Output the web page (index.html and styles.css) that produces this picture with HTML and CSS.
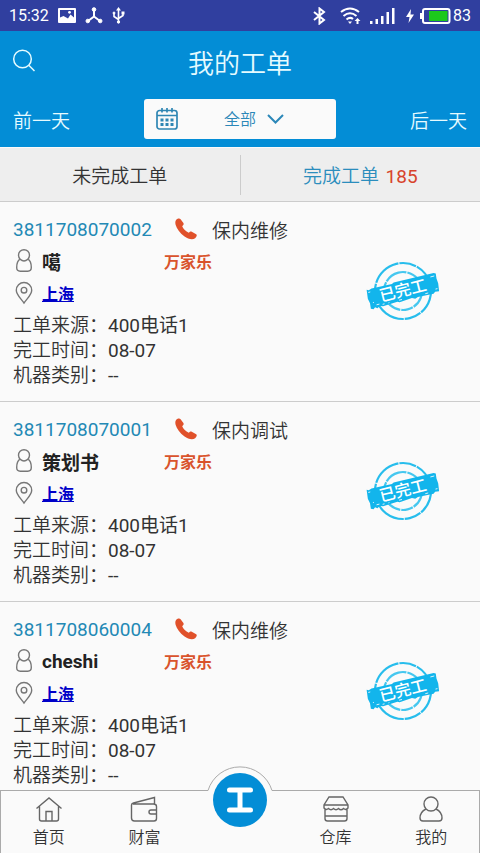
FILE: index.html
```html
<!DOCTYPE html>
<html lang="zh-CN">
<head>
    <meta charset="UTF-8">
    <meta name="viewport" content="width=device-width, initial-scale=1.0">
    <title>我的工单</title>
    <link rel="stylesheet" href="styles.css">
</head>
<body>
    <!-- shared icons -->
    <svg class="sprite" aria-hidden="true">
        <symbol id="icon-phone" viewBox="0 0 22 22">
            <path d="M1.200 1.800C2.600.4 4.600-.1 5.600 1.200L8.400 5C9 6.200 8.600 6.900 7.200 8.200C8.300 10.800 10.800 13.200 13.800 14.700C15 13.500 15.700 13 16.800 13.700L21.200 16.200C22.400 17.200 21.500 18.900 20.100 20.200C17.700 22.300 13.300 21.300 9.200 18.300C5 15.100 1.700 10.500.6 6.700C.1 4.800.2 3 1.200 1.800Z"/>
        </symbol>
        <symbol id="icon-user" viewBox="0 0 18 24">
            <path d="M5.200 10.200A5.500 5.500 0 1 1 12.800 10.200C15.300 11.500 16.300 14.500 16.300 18.500C16.300 21 15.200 22.200 12.700 22.200H5.300C2.800 22.200 1.700 21 1.700 18.500C1.700 14.500 2.700 11.500 5.200 10.200ZM5.200 10.200Q9 13.600 12.800 10.200"/>
        </symbol>
        <symbol id="icon-pin" viewBox="0 0 18 24">
            <path d="M9 22C6 17.500 1.300 13.800 1.300 9.200A7.700 7.700 0 0 1 16.700 9.200C16.700 13.800 12 17.500 9 22Z"/>
            <circle cx="9" cy="9.200" r="2.800"/>
        </symbol>
        <symbol id="icon-stamp" viewBox="0 0 74 60">
            <g transform="rotate(-14 37 30)">
                <circle cx="37" cy="30" r="28" fill="none" stroke="#27bdec" stroke-width="2.200" stroke-dasharray="31 1 17 1 42 1 9 1"/>
                <circle cx="37" cy="30" r="19" fill="none" stroke="#45c7ef" stroke-width="2.200" stroke-dasharray="23 1 12 1"/>
                <path fill="#12b5ec" d="M2 20L4 21 7 20 28 20.500 30 19.500 71 20 73 21 72.500 26 73 31 72 39 68 38.500 66 40 50 39.500 47 40.500 44 39 31 40 29 39 14 40 11 39 8 40.500 6 39 4 40.500 1.500 39.500 2 34 1 29Z"/>
                <path fill="none" stroke="#fafafa" stroke-width=".8" d="M3 23h2M8 37h3M14 38h2M31 38h3M67 23h4M69 36h2M5 34h1M58 38h3M20 38h1"/>
            </g>
        </symbol>
    </svg>

    <div class="app">
        <div class="status-bar">
            <span class="status-time">15:32</span>
            <svg class="status-picture" width="18" height="15" viewBox="0 0 18 15">
                <rect width="18" height="15" rx="1" fill="#fff"/>
                <path fill="#303f9f" d="M2 9.500V2H16V9.500L12.500 6.500 10 10.500 5.500 8Z"/>
                <circle cx="11.500" cy="4.300" r="1.400" fill="#fff"/>
            </svg>
            <svg width="18" height="17" viewBox="0 0 18 17" fill="#fff" stroke="#fff">
                <path d="M9 3V9.500L3 14M9 9.500L15 14" fill="none" stroke-width="2"/>
                <circle cx="9" cy="2.500" r="1.800"/>
                <circle cx="2.800" cy="14" r="1.800"/>
                <circle cx="15.200" cy="14" r="1.800"/>
            </svg>
            <svg width="13" height="17" viewBox="0 0 13 17" fill="#fff" stroke="#fff">
                <path d="M6.500 3V15M2 6V9.500L6.500 12.500M11 6V8.500L6.500 11.500" fill="none" stroke-width="1.600"/>
                <path d="M6.500 0L4 3.500H9Z" stroke="none"/>
                <circle cx="6.500" cy="15" r="1.200"/>
                <circle cx="2" cy="6" r="1"/>
                <rect x="10" y="5" width="2" height="2"/>
            </svg>
            <div class="status-right">
                <svg class="status-bluetooth" width="13" height="18" viewBox="0 0 13 18" fill="none" stroke="#fff" stroke-width="2">
                    <path d="M1 5L11 13L6.500 16.500V1.500L11 5L1 13"/>
                </svg>
                <svg class="status-wifi" width="21" height="18" viewBox="0 0 21 18" fill="none" stroke="#fff" stroke-width="2">
                    <path d="M1 5Q10 -2 19 5M3.500 9Q10 3.500 16.500 9M6.500 12.500Q10 9.500 13 12"/>
                    <path d="M8 14.500H12L10 17Z" fill="#fff" stroke="none"/>
                    <path d="M17.500 11L20.500 14H18.500V17H16.500V14H14.500Z" fill="#fff" stroke="none"/>
                </svg>
                <svg class="status-signal" width="25" height="16" viewBox="0 0 25 16" fill="#fff">
                    <path d="M0 13h2.500v3H0zM5.500 11H8v5H5.500zM11 8h2.500v8H11zM16.500 4H19v12h-2.500zM22 0h2.500v16H22z"/>
                </svg>
                <svg class="status-bolt" width="8" height="14" viewBox="0 0 8 14" fill="#fff">
                    <path d="M5 0L0 8H3.500L2.500 14L8 5.500H4.500Z"/>
                </svg>
                <svg width="31" height="16" viewBox="0 0 31 16">
                    <rect x="3" y="1" width="26.500" height="14" rx="2" fill="none" stroke="#fff" stroke-width="2"/>
                    <path d="M0 5h3v6H0z" fill="#fff"/>
                    <path d="M9 3h18.500v10H9z" fill="#1cc81c"/>
                </svg>
                <span class="status-battery">83</span>
            </div>
        </div>

        <header class="header">
            <div class="title-row">
                <button class="search" type="button" aria-label="搜索">
                    <svg width="24" height="24" viewBox="0 0 24 24" fill="none" stroke="#e6fbff" stroke-width="1.500">
                        <circle cx="10.500" cy="10" r="8.800"/>
                        <path d="M16.800 16.300L22.500 22"/>
                    </svg>
                </button>
                <h1>我的工单</h1>
            </div>
            <div class="date-row">
                <button class="day" type="button">前一天</button>
                <label class="date-picker">
                    <svg width="22" height="22" viewBox="0 0 22 22" fill="none" stroke="#2f86b3" stroke-width="1.700">
                        <rect x="1" y="2.500" width="20" height="18.500" rx="2.500"/>
                        <path d="M1 7.500H21M6 0V4.500M11 0V4.500M16 0V4.500"/>
                        <path d="M4.500 12H7.500M9.500 12H12.500M14.500 12H17.500M4.500 16.500H7.500M9.500 16.500H12.500M14.500 16.500H17.500" stroke-width="2.800"/>
                    </svg>
                    <select aria-label="日期">
                        <option>全部</option>
                    </select>
                    <svg width="17" height="10" viewBox="0 0 17 10" fill="none" stroke="#2b87b8" stroke-width="2">
                        <path d="M1 1L8.500 8.500L16 1"/>
                    </svg>
                </label>
                <button class="day next" type="button">后一天</button>
            </div>
        </header>

        <div class="tabs">
            <button class="tab" type="button">未完成工单</button>
            <button class="tab active" type="button">完成工单 <span class="count">185</span></button>
        </div>

        <main class="orders">
            <article class="order">
                <div class="order-info">
                    <div class="order-row">
                        <span class="order-number">3811708070002</span>
                        <svg class="phone"><use href="#icon-phone"/></svg>
                        <span>保内维修</span>
                    </div>
                    <div class="order-row">
                        <svg class="row-icon"><use href="#icon-user"/></svg>
                        <span class="name">噶</span>
                        <span class="brand">万家乐</span>
                    </div>
                    <div class="order-row">
                        <svg class="row-icon"><use href="#icon-pin"/></svg>
                        <a class="city" href="#">上海</a>
                    </div>
                    <div class="details">
                        <p>工单来源：<span class="value">400电话1</span></p>
                        <p>完工时间：<span class="value">08-07</span></p>
                        <p>机器类别：<span class="value">--</span></p>
                    </div>
                </div>
                <div class="stamp">
                    <svg><use href="#icon-stamp"/></svg>
                    <span>已完工</span>
                </div>
            </article>

            <article class="order">
                <div class="order-info">
                    <div class="order-row">
                        <span class="order-number">3811708070001</span>
                        <svg class="phone"><use href="#icon-phone"/></svg>
                        <span>保内调试</span>
                    </div>
                    <div class="order-row">
                        <svg class="row-icon"><use href="#icon-user"/></svg>
                        <span class="name">策划书</span>
                        <span class="brand">万家乐</span>
                    </div>
                    <div class="order-row">
                        <svg class="row-icon"><use href="#icon-pin"/></svg>
                        <a class="city" href="#">上海</a>
                    </div>
                    <div class="details">
                        <p>工单来源：<span class="value">400电话1</span></p>
                        <p>完工时间：<span class="value">08-07</span></p>
                        <p>机器类别：<span class="value">--</span></p>
                    </div>
                </div>
                <div class="stamp">
                    <svg><use href="#icon-stamp"/></svg>
                    <span>已完工</span>
                </div>
            </article>

            <article class="order">
                <div class="order-info">
                    <div class="order-row">
                        <span class="order-number">3811708060004</span>
                        <svg class="phone"><use href="#icon-phone"/></svg>
                        <span>保内维修</span>
                    </div>
                    <div class="order-row">
                        <svg class="row-icon"><use href="#icon-user"/></svg>
                        <span class="name">cheshi</span>
                        <span class="brand">万家乐</span>
                    </div>
                    <div class="order-row">
                        <svg class="row-icon"><use href="#icon-pin"/></svg>
                        <a class="city" href="#">上海</a>
                    </div>
                    <div class="details">
                        <p>工单来源：<span class="value">400电话1</span></p>
                        <p>完工时间：<span class="value">08-07</span></p>
                        <p>机器类别：<span class="value">--</span></p>
                    </div>
                </div>
                <div class="stamp">
                    <svg><use href="#icon-stamp"/></svg>
                    <span>已完工</span>
                </div>
            </article>
        </main>

        <nav class="nav">
            <a class="nav-item" href="#">
                <svg width="28" height="28" viewBox="0 0 28 28">
                    <path d="M1.500 13.500L14 3L26.500 13.500M4.500 11.500V24Q4.500 26 6.500 26H21.500Q23.500 26 23.500 24V11.500M11 26V16.500H17V26"/>
                </svg>
                首页
            </a>
            <a class="nav-item" href="#">
                <svg width="28" height="28" viewBox="0 0 28 28">
                    <path d="M3 9H23.500Q26.500 9 26.500 11.500V23.500Q26.500 26 24 26H4.500Q1.500 26 1.500 23V10Q1.500 8.500 3.500 8L24.500 2.500V9M26.500 15H21Q19 15 19 17Q19 19 21 19H26.500"/>
                </svg>
                财富
            </a>
            <div class="nav-center">
                <svg class="bump" width="68" height="26" viewBox="0 0 68 26">
                    <path d="M2 26V24.500A33.500 33.500 0 0 1 66 24.500V26Z" fill="#fafafa"/>
                    <path d="M1 25.500H2A33.500 33.500 0 0 1 66 25.500H67" fill="none" stroke="#aaa"/>
                </svg>
                <button class="main-button" type="button" aria-label="工单">
                    <svg width="30" height="30" viewBox="0 0 30 30" fill="none" stroke="#fff" stroke-width="5" stroke-linecap="round">
                        <path d="M4.500 5H25.500M4.500 25H25.500"/>
                        <path d="M15 6V24"/>
                    </svg>
                </button>
            </div>
            <a class="nav-item" href="#">
                <svg width="28" height="28" viewBox="0 0 28 28">
                    <path d="M7 2H21L26 10V13Q24 15.500 21.500 13.500Q19 16 16.500 13.500Q14 16 11.500 13.500Q9 16 6.500 13.500Q4 15.500 2 13V10ZM2 10H26M3 14.500V23.500Q3 26 5.500 26H22.500Q25 26 25 23.500V14.500M3 21H25"/>
                </svg>
                仓库
            </a>
            <a class="nav-item" href="#">
                <svg width="28" height="28" viewBox="0 0 28 28">
                    <circle cx="14" cy="9" r="7"/>
                    <path d="M9 14C5 16 3 19.500 3 23Q3 26 6 26H22Q25 26 25 23C25 19.500 23 16 19 14"/>
                </svg>
                我的
            </a>
        </nav>
    </div>
</body>
</html>
```
FILE: styles.css
```css
* {
    box-sizing: border-box;
}

body {
    margin: 0;
    font-family: Roboto, "Noto Sans CJK SC", sans-serif;
    font-size: 19px;
    color: #333;
    background-color: #fafafa;
}

button, select {
    font: inherit;
    color: inherit;
    background: none;
    border: 0;
    padding: 0;
    margin: 0;
}

svg {
    display: block;
    flex-shrink: 0;
}

.sprite {
    position: absolute;
    width: 0;
    height: 0;
}

.app {
    display: flex;
    flex-direction: column;
    height: 100vh;
    font-weight: 350;
}

/* status bar */
.status-bar {
    display: flex;
    align-items: center;
    gap: 9px;
    height: 31px;
    flex-shrink: 0;
    padding: 0 9px;
    background-color: #303f9f;
    color: #fff;
    font-size: 16px;
    font-weight: 400;
}

.status-right {
    display: flex;
    align-items: center;
    margin-left: auto;
}

.status-bluetooth {
    margin-right: 14px;
}

.status-wifi {
    margin-right: 9px;
}

.status-signal {
    margin-right: 11px;
}

.status-bolt {
    margin-right: 6px;
}

.status-battery {
    margin-left: 2px;
}

/* header */
.header {
    flex-shrink: 0;
    background-color: #038dd6;
    color: #e6fbff;
}

.title-row {
    display: grid;
    grid-template-columns: 1fr auto 1fr;
    align-items: center;
    height: 60px;
    padding: 0 12px;
}

.search {
    justify-self: start;
}

h1 {
    margin: 0;
    font-size: 26px;
    font-weight: 350;
}

.date-row {
    display: grid;
    grid-template-columns: 3fr 4fr 3fr;
    align-items: center;
    height: 56px;
}

.day {
    padding: 0 13px;
    text-align: left;
}

.next {
    text-align: right;
}

.date-picker {
    display: flex;
    align-items: center;
    height: 40px;
    padding-left: 12px;
    background-color: #fafafa;
    border-radius: 3px;
    color: #2b87b8;
    font-size: 16px;
}

.date-picker select {
    appearance: none;
    margin-left: 46px;
    margin-right: 10px;
}

/* tabs */
.tabs {
    display: flex;
    align-items: center;
    height: 55px;
    flex-shrink: 0;
    background-color: #eee;
    border-top: 1px solid #fafafa;
    border-bottom: 1px solid #ccc;
}

.tab {
    flex: 1;
    height: 40px;
}

.tab + .tab {
    border-left: 1px solid #ccc;
}

.active {
    color: #2b8dbd;
}

.count {
    margin-left: 2px;
    color: #d8432b;
    font-weight: 400;
}

/* order list */
.orders {
    flex: 1;
    min-height: 0;
    overflow-y: auto;
    scrollbar-width: none;
}

.order {
    display: flex;
    align-items: flex-start;
    padding: 11px 40px 13px 13px;
    border-bottom: 1px solid #ccc;
}

.order-info {
    flex: 1;
}

.order-row {
    display: flex;
    align-items: center;
    height: 32px;
}

.order-number {
    width: 162px;
    color: #2389b5;
    font-weight: 400;
}

.phone {
    width: 22px;
    height: 22px;
    margin-right: 15px;
    fill: #e0512a;
}

.row-icon {
    width: 18px;
    height: 24px;
    margin-left: 2px;
    margin-right: 9px;
    fill: none;
    stroke: #777;
    stroke-width: 1.4;
}

.name {
    width: 122px;
    font-weight: 700;
    color: #222;
}

.brand {
    color: #d9532c;
    font-size: 16px;
    font-weight: 700;
}

.city {
    color: #0000c8;
    font-size: 16px;
    font-weight: 700;
}

.details {
    margin-top: 4px;
}

.details p {
    margin: 0;
    line-height: 25px;
}

.value {
    font-weight: 400;
}

.stamp {
    position: relative;
    width: 74px;
    height: 60px;
    margin-top: 48px;
}

.stamp svg {
    width: 74px;
    height: 60px;
}

/* label lies over the stamp's banner */
.stamp span {
    position: absolute;
    inset: 0;
    color: #fff;
    font-size: 16px;
    font-weight: 500;
    line-height: 60px;
    text-align: center;
    transform: rotate(-14deg);
}

/* bottom navigation */
.nav {
    display: grid;
    grid-template-columns: repeat(5, 1fr);
    height: 63px;
    flex-shrink: 0;
    background-color: #fafafa;
    border: 1px solid #aaa;
    border-bottom: 0;
}

.nav-item {
    display: flex;
    flex-direction: column;
    align-items: center;
    padding-top: 4px;
    color: #333;
    font-size: 16px;
    line-height: 30px;
    text-decoration: none;
}

.nav-item svg {
    fill: none;
    stroke: #666;
    stroke-width: 1.4;
}

.nav-center {
    position: relative;
}

/* bump and round button rise above the bar */
.bump {
    position: absolute;
    left: 50%;
    bottom: 100%;
    transform: translateX(-50%);
}

.main-button {
    position: absolute;
    left: 50%;
    top: -18px;
    display: flex;
    align-items: center;
    justify-content: center;
    width: 54px;
    height: 54px;
    border-radius: 50%;
    background-color: #038dd6;
    transform: translateX(-50%);
}
```
